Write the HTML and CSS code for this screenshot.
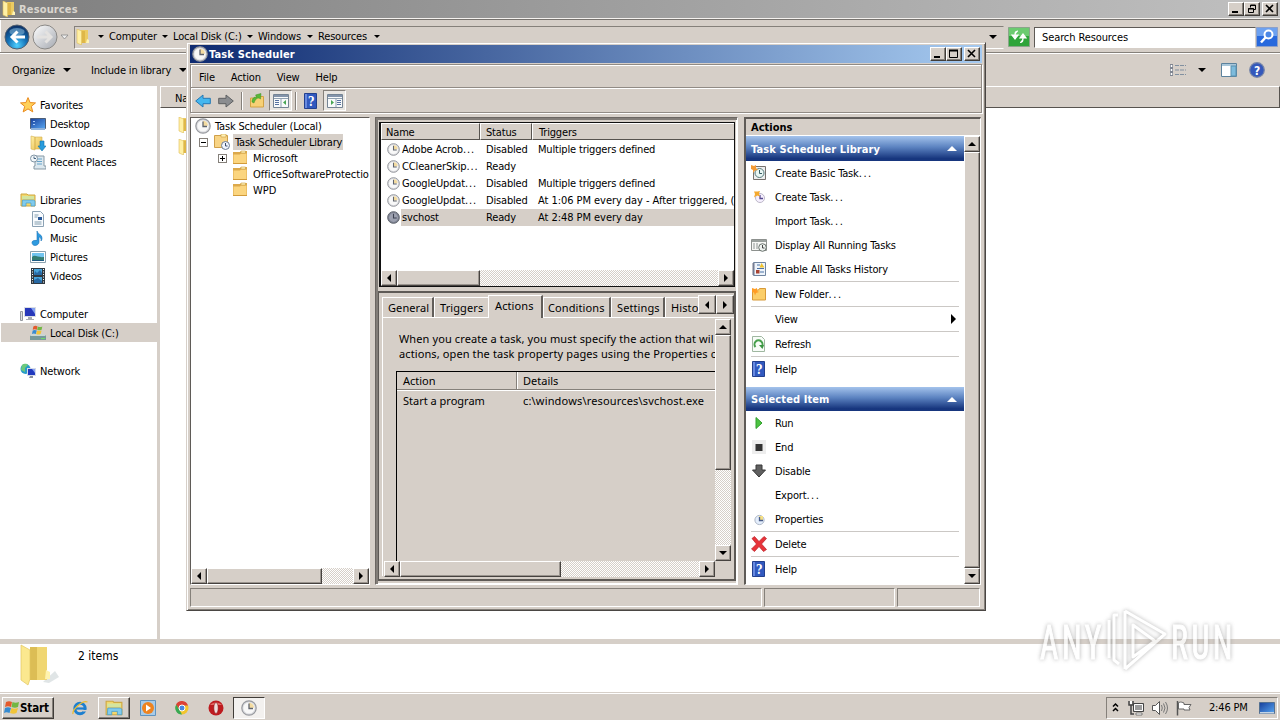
FILE: index.html
```html
<!DOCTYPE html>
<html lang="en">
<head>
    <meta charset="UTF-8">
    <title>Task Scheduler</title>
    <link rel="stylesheet" href="styles.css">
</head>
<body>
    <!-- Shared icons -->
    <svg class="sprite" width="0" height="0">
        <defs>
            <linearGradient id="gold" x1="0" y1="0" x2="1" y2="1"><stop offset="0" stop-color="#fff0a8"/><stop offset="1" stop-color="#e9bb46"/></linearGradient>
            <linearGradient id="screen" x1="0" y1="0" x2="1" y2="1"><stop offset="0" stop-color="#173e9a"/><stop offset="1" stop-color="#59a7f2"/></linearGradient>
            <linearGradient id="silver" x1="0" y1="0" x2="1" y2="1"><stop offset="0" stop-color="#fff"/><stop offset="1" stop-color="#a4a8b0"/></linearGradient>
            <radialGradient id="orb" cx=".5" cy=".85" r=".8"><stop offset="0" stop-color="#4fd0ff"/><stop offset=".5" stop-color="#1573b8"/><stop offset="1" stop-color="#0c3268"/></radialGradient>
        </defs>
        <symbol id="clock" viewBox="0 0 16 16"><circle cx="8" cy="8" r="7.2" fill="#d9dade" stroke="#97999e" stroke-width="1.200"/><circle cx="8" cy="8" r="5.6" fill="#f8f8f8"/><path d="M8 8V2.800a5 5 0 0 1 5 5z" fill="#f3dba0"/><path d="M8 3.4V8.5H12" fill="none" stroke="#5f646e" stroke-width="1.300"/></symbol>
        <symbol id="clock-dark" viewBox="0 0 16 16"><circle cx="8" cy="8" r="7.2" fill="#7c8190" stroke="#62666f" stroke-width="1.200"/><circle cx="8" cy="8" r="5.4" fill="#9da1b0"/><path d="M8 3.4V8.5H12" fill="none" stroke="#3d4252" stroke-width="1.300"/></symbol>
        <symbol id="folder" viewBox="0 0 16 16"><path d="M1 2h7l1-1h6v13H1z" fill="#dca94c"/><path d="M1.500 4.500h6.500l1-1h5.500V13h-13z" fill="#fbd57f"/><path d="M9 1h4.500v2H9z" fill="#fff1b8" stroke="#c99b3c" stroke-width=".6"/><path d="M1 13.500h14" stroke="#d29b3a"/></symbol>
        <symbol id="folder-clock" viewBox="0 0 16 16"><path d="M.5 1.500h13v12H.5z" fill="#f8d485" stroke="#d0a04a"/><path d="M7 0h5v3H7z" fill="#fff1b8" stroke="#c99b3c" stroke-width=".6"/><circle cx="11.500" cy="11.500" r="4" fill="#f0f5ff" stroke="#6d7b92"/><path d="M11.500 9v3h2" fill="none" stroke="#3b4b69"/></symbol>
        <symbol id="folder-open" viewBox="0 0 16 16"><path d="M6 1h7v13H6z" fill="#eccb62"/><path d="M7 2h3v12H7z" fill="#dfb748"/><path d="M2 0l4.500 2v14L2 14z" fill="#fff0a5" stroke="#dfbd59" stroke-width=".6"/><path d="M12 10l2 1v3h-3z" fill="#fff4b5"/></symbol>
        <symbol id="star" viewBox="0 0 16 16"><path d="M8 .6l2.100 5 5.400.3-4.200 3.500 1.500 5.500L8 11.900l-4.800 3 1.500-5.500L.5 5.900l5.400-.3z" fill="#ffd15a" stroke="#e98a1e"/></symbol>
        <symbol id="desktop" viewBox="0 0 16 16"><path d="M.5 2.500h15v10H.5z" fill="url(#screen)" stroke="#4c5d76"/><path d="M1 12h14v2H1z" fill="#8eb2dc"/><path d="M3 5h2v1H3zM3 8h2v1H3z" fill="#a8c9f5"/></symbol>
        <symbol id="download" viewBox="0 0 16 16"><path d="M1 1l4 1v13l-4-1zM5 2h7v12H5z" fill="url(#gold)" stroke="#d3b04e" stroke-width=".6"/><path d="M10 6h4v5h2l-4 5-4-5h2z" fill="#279bdd" stroke="#1374ad" stroke-width=".6"/></symbol>
        <symbol id="recent" viewBox="0 0 16 16"><path d="M5 2h9v10h2v3H4v-3h1z" fill="#dce8ef" stroke="#8799a5"/><path d="M7 5h5M7 7.500h5M7 10h5" stroke="#66a3c9"/><circle cx="4" cy="4.500" r="3.500" fill="#f2f7fa" stroke="#8296a5"/><path d="M4 2.500v2h2" fill="none" stroke="#45637e"/></symbol>
        <symbol id="library" viewBox="0 0 16 16"><path d="M1 2h6l1 1h7v11H1z" fill="#f4d76b" stroke="#cda843"/><path d="M2 4h12v3H2z" fill="#d3e5a0"/><path d="M2.500 8h11l1.500 1v5h-4v-3H6v3H2z" fill="#80cbed" stroke="#4a9bc6" stroke-width=".7"/></symbol>
        <symbol id="document" viewBox="0 0 16 16"><path d="M2.500.5h8l3 3v12h-11z" fill="#f8fbfe" stroke="#8ca2b4"/><path d="M4.500 4h4M4.500 6h3M4.500 11h7M4.500 13h7" stroke="#829dae"/><path d="M8 6h4v3H8z" fill="#285798"/></symbol>
        <symbol id="music" viewBox="0 0 16 16"><path d="M7 1c1 4 5 3 5 7 0 2-1 3-1 3 .5-3-1-4-2-4v5c0 2-2 3.500-4 3.500S2 14 2 12.500 4 10 7 10.500z" fill="#2e9be0" stroke="#1872b8" stroke-width=".6"/></symbol>
        <symbol id="picture" viewBox="0 0 16 16"><path d="M.5 2.500h15v11H.5z" fill="#fff" stroke="#8ba1ae"/><path d="M2 4h12v8H2z" fill="#71c4ef"/><path d="M2 8c3-3 6 1 12 0v4H2z" fill="#347d72"/><path d="M2 11h12v1H2z" fill="#1d5b83"/></symbol>
        <symbol id="video" viewBox="0 0 16 16"><path d="M1 0h14v16H1z" fill="#303941"/><path d="M4 1h8v6H4zM4 9h8v6H4z" fill="#48a5dc"/><path d="M5 3l2 2 3-3 2 3v2H4zM4 12l4-2 4 3v2H4z" fill="#2869a4"/><path d="M2.500 1v14M13.500 1v14" stroke="#fff" stroke-dasharray="1 1.500"/></symbol>
        <symbol id="computer" viewBox="0 0 16 16"><path d="M.5 5.500h2v9h-2z" fill="#dedfe2" stroke="#95999e"/><path d="M4 1h12v10H4z" fill="#d9dde4"/><path d="M5 2h10v8H5z" fill="#2738ba"/><path d="M11 2h4v6z" fill="#829ff0"/><path d="M8 11h4v2h2v1H6v-1h2z" fill="#a7abb3"/></symbol>
        <symbol id="winflag" viewBox="0 0 16 16"><path d="M2 2c2-1 4-1 6 0L7 7C5 6 3 6 1 7z" fill="#e45a2c"/><path d="M8.500 2c2 1 4 1 6.500 0l-1 5c-2 1-4 1-6.500 0z" fill="#72b743"/><path d="M1 8c2-1 4-1 6 0l-1.500 5c-2-1-4-1-5.500 0z" fill="#368bd1"/><path d="M7.500 8c2 1 4 1 6.500 0l-1.500 5c-2 1-4 1-6.500 0z" fill="#f1c438"/></symbol>
        <symbol id="disk" viewBox="0 0 16 16"><path d="M0 10h16v5H0z" fill="#77999a"/><path d="M1 9h13l2 2H0z" fill="#cad6d5"/><path d="M11 13h4v1h-4z" fill="#70db69"/><use href="#winflag" x="2" y="0" width="11" height="11"/></symbol>
        <symbol id="network" viewBox="0 0 16 16"><circle cx="5.500" cy="6" r="5" fill="#289bc8"/><path d="M2 2c3-2 5-1 6 0L5 5v4L1 7z" fill="#6cca7c"/><path d="M7 5h9v8H7z" fill="#d5dae8"/><path d="M8 6h7v6H8z" fill="#2039be"/><path d="M12 6h3v4z" fill="#8aa4f1"/><path d="M10 13h3v2H9z" fill="#8a909e"/></symbol>
        <symbol id="arrow-left" viewBox="0 0 16 16"><path d="M.7 8L8 2v3.300h7.300v5.400H8V14z" fill="#45b7ef" stroke="#2578b4"/></symbol>
        <symbol id="arrow-right" viewBox="0 0 16 16"><path d="M15.300 8L8 2v3.300H.7v5.400H8V14z" fill="#8b8d90" stroke="#5e6062"/></symbol>
        <symbol id="folder-up" viewBox="0 0 16 16"><path d="M1.500 5h5l1-1.500h7V14h-13z" fill="#f7d075" stroke="#d2a244"/><path d="M3 9c0-4 2-5 5-5L6.500 2 12 .5 11.500 6 10 5C7 5 6 7 5 10z" fill="#58b938" stroke="#3c8f25" stroke-width=".5"/></symbol>
        <symbol id="pane-left" viewBox="0 0 16 16"><path d="M.5 1.500h15v13H.5z" fill="#f8fafb" stroke="#758494"/><path d="M1 2h14v2H1z" fill="#8394ab"/><path d="M1 5.500h14M8 6v8" stroke="#8fa0b1"/><path d="M2 7.500h4M2 9.500h4M2 11.500h4" stroke="#5671a0"/><path d="M13 7v5l-3-2.500z" fill="#47a553"/></symbol>
        <symbol id="pane-right" viewBox="0 0 16 16"><path d="M.5 1.500h15v13H.5z" fill="#f8fafb" stroke="#758494"/><path d="M1 2h14v2H1z" fill="#8394ab"/><path d="M1 5.500h14M9 6v8" stroke="#8fa0b1"/><path d="M10 7.500h4M10 9.500h4M10 11.500h4" stroke="#5671a0"/><path d="M4 7v5l3-2.500z" fill="#47a553"/></symbol>
        <symbol id="help" viewBox="0 0 16 16"><path d="M1.500.5h12v15h-12z" fill="#3159bf" stroke="#23408e"/><path d="M2 1h2v14H2z" fill="#6789df"/><text x="8" y="12.500" text-anchor="middle" font-family="DejaVu Serif" font-size="12" font-weight="700" fill="#fff">?</text></symbol>
        <symbol id="basic-task" viewBox="0 0 16 16"><path d="M2.500 1.500h12v13h-12z" fill="#eee" stroke="#76716d"/><circle cx="8.500" cy="8" r="4.500" fill="#e8f5f2" stroke="#57797b"/><path d="M8.500 5v3.500h2.500" fill="none" stroke="#365c62"/><path d="M0 0l3 1 2-1v3l2 2-3 .5L2 8V5L0 4z" fill="#f29a35"/></symbol>
        <symbol id="new-task" viewBox="0 0 16 16"><circle cx="9" cy="9" r="4.500" fill="#f6f0ff" stroke="#bdb8c8"/><path d="M9 6v3.500h3" fill="none" stroke="#574a8e" stroke-width="1.300"/><path d="M3 2.500h3.500L9 2 8 4.500l1 3-3-1-3 2 1-3.500z" fill="#f5a92d"/></symbol>
        <symbol id="running" viewBox="0 0 16 16"><path d="M.5 2.500h15v11H.5z" fill="#f7f7f5" stroke="#8d918e"/><path d="M1 3h14v2H1z" fill="#9aa09d"/><path d="M2 7h6M2 9h6M2 11h6" stroke="#8d9492" stroke-dasharray="2 1"/><circle cx="11.500" cy="10.500" r="3.800" fill="#eef2ef" stroke="#68716c"/><path d="M11.500 8v3h2" fill="none" stroke="#444"/></symbol>
        <symbol id="history" viewBox="0 0 16 16"><path d="M2.500 1.500h12v13h-12z" fill="#eef4fb" stroke="#7085a0"/><path d="M1 3h3M1 5h3M1 7h3M1 9h3M1 11h3M1 13h3" stroke="#778"/><path d="M6 4h3M6 7.500h7M9 11h4" stroke="#4d72a4"/><path d="M10.500 2l3 4.500h-5z" fill="#f1c32d"/><path d="M5 9h3.500v3.500H5z" fill="#a84432"/></symbol>
        <symbol id="new-folder" viewBox="0 0 16 16"><path d="M1.500 4h6l1-1.500h6V14h-13z" fill="#fbce69" stroke="#d89a38"/><path d="M1 2l3 1L6 2v3l2 1-3 1-1 2.500-1-3-2-.5z" fill="#ff9c24"/></symbol>
        <symbol id="refresh" viewBox="0 0 16 16"><path d="M1.500.5h9l3 3v12h-12z" fill="#f8fcf8" stroke="#9fb7a0"/><path d="M10.500 11a4 4 0 1 0-6 0" fill="none" stroke="#47a04c" stroke-width="2"/><path d="M8 9h5l-1.500 4z" fill="#3b9542"/></symbol>
        <symbol id="run" viewBox="0 0 16 16"><path d="M5 2.500l6 5.500-6 5.500z" fill="#4cc342" stroke="#319f2c"/></symbol>
        <symbol id="end" viewBox="0 0 16 16"><path d="M1 1h14v14H1z" fill="#ededed"/><path d="M4.500 5h7v7h-7z" fill="#333"/></symbol>
        <symbol id="disable" viewBox="0 0 16 16"><path d="M5 2h6v5h3.500L8 14 1.500 7H5z" fill="#606060" stroke="#393939"/></symbol>
        <symbol id="properties" viewBox="0 0 16 16"><circle cx="8.500" cy="9" r="4.600" fill="#e4eefc" stroke="#aeb7c6"/><path d="M8 5h4v4H8z" fill="#f5df85"/><path d="M8.500 6v3.500H12" fill="none" stroke="#485b86" stroke-width="1.300"/></symbol>
        <symbol id="delete" viewBox="0 0 16 16"><path d="M1 2.500L3.500.5 8 5.500 13 .5 15.500 2.500 10.500 8l5 5.500-3 2L8 10.500l-4.500 5-3-2.500L5.500 8z" fill="#e8343a" stroke="#b81d24" stroke-width=".7"/></symbol>
    </svg>

    <!-- Explorer window -->
    <div class="explorer">
        <div class="explorer-title">
            <svg class="i16"><use href="#folder-open"/></svg>
            <b>Resources</b>
            <div class="win-buttons">
                <span class="wb"><svg viewBox="0 0 12 10"><path d="M2 8h6" stroke="#000" stroke-width="2"/></svg></span>
                <span class="wb"><svg viewBox="0 0 12 10"><path d="M4.500 3.500v-2.500h5v4.500h-2M2.500 4.500h5v4h-5z" fill="none" stroke="#000"/><path d="M4 1.500h6M2 5h6" stroke="#000"/></svg></span>
                <span class="wb close"><svg viewBox="0 0 12 10"><path d="M2 1l7 7M9 1l-7 7" stroke="#000" stroke-width="1.600"/></svg></span>
            </div>
        </div>
        <div class="navbar">
            <svg class="travel" viewBox="0 0 66 28">
                <circle cx="13" cy="14" r="12" fill="url(#orb)" stroke="#53606f"/>
                <path d="M6 7a10 7 0 0 1 14 0c2 4-2 5-7 5S4 11 6 7z" fill="#7fb1d4" opacity=".6"/>
                <path d="M21 14H8M13.500 8.500L8 14l5.500 5.500" fill="none" stroke="#fff" stroke-width="3"/>
                <circle cx="41" cy="14" r="12" fill="url(#silver)" stroke="#8b8986"/>
                <path d="M33 14h14M41.500 8.500L47 14l-5.500 5.500" fill="none" stroke="#e4e2e0" stroke-width="3"/>
                <path d="M57 12h7l-3.500 4z" fill="#eee" stroke="#888" stroke-width=".8"/>
            </svg>
            <div class="address">
                <svg class="i16"><use href="#folder-open"/></svg>
                <i class="down first"></i><span class="c1">Computer</span>
                <i class="down"></i><span class="c2">Local Disk (C:)</span>
                <i class="down"></i><span class="c3">Windows</span>
                <i class="down"></i><span class="c4">Resources</span>
                <i class="down"></i>
                <i class="down last"></i>
            </div>
            <svg class="go" viewBox="0 0 22 20"><path d="M.5.5h21v19H.5z" fill="#2fa43a" stroke="#8aa58a"/><path d="M1 1h20v8H1z" fill="#6ccb70"/><path d="M10 4C7 4 7 6 7 8M4 8h6l-3 4zM12 15.500c3 0 3-2 3-4M12 11h6l-3-4z" fill="#fff" stroke="#fff" stroke-width="1.200"/></svg>
            <div class="search">Search Resources</div>
            <svg class="go" viewBox="0 0 22 20"><path d="M.5.5h21v19H.5z" fill="#2869dd" stroke="#8da0c8"/><path d="M1 1h20v8H1z" fill="#6da1f0"/><circle cx="12.500" cy="7.500" r="4" fill="#4b87e6" stroke="#fff" stroke-width="2"/><path d="M9.500 10.500L5 15.500" stroke="#fff" stroke-width="2.500"/></svg>
        </div>
        <div class="commands">
            <span class="organize">Organize</span><i class="down big"></i>
            <span class="include">Include in library</span><i class="down big"></i>
            <svg class="views" viewBox="0 0 16 14"><path d="M1.500 1v12" stroke="#7f8590" stroke-width="3"/><path d="M1.500 2v10" stroke="#fff" stroke-width="1.500" stroke-dasharray="2 2"/><path d="M5 2.500h11M5 7h11M5 11.500h11" stroke="#8190a0" stroke-dasharray="4 1"/></svg>
            <i class="down big"></i>
            <svg class="preview" viewBox="0 0 16 14"><path d="M.5.5h15v13H.5z" fill="#fff" stroke="#5c829d"/><path d="M1 1h14v2H1z" fill="#a9c7da"/><path d="M10 3h5v10h-5z" fill="#7dbbdc" stroke="#5a91b0"/></svg>
            <svg class="i16 qhelp" viewBox="0 0 16 16"><circle cx="8" cy="8" r="7.300" fill="#3458bb" stroke="#7886a8" stroke-width="1.200"/><text x="8" y="12.500" text-anchor="middle" font-family="DejaVu Sans" font-size="12" font-weight="700" fill="#fff">?</text></svg>
        </div>
        <div class="explorer-body">
            <div class="places">
                <div class="place group"><svg class="i16"><use href="#star"/></svg><span>Favorites</span></div>
                <div class="place"><svg class="i16"><use href="#desktop"/></svg><span>Desktop</span></div>
                <div class="place"><svg class="i16"><use href="#download"/></svg><span>Downloads</span></div>
                <div class="place"><svg class="i16"><use href="#recent"/></svg><span>Recent Places</span></div>
                <div class="place group spaced"><svg class="i16"><use href="#library"/></svg><span>Libraries</span></div>
                <div class="place"><svg class="i16"><use href="#document"/></svg><span>Documents</span></div>
                <div class="place"><svg class="i16"><use href="#music"/></svg><span>Music</span></div>
                <div class="place"><svg class="i16"><use href="#picture"/></svg><span>Pictures</span></div>
                <div class="place"><svg class="i16"><use href="#video"/></svg><span>Videos</span></div>
                <div class="place group spaced"><svg class="i16"><use href="#computer"/></svg><span>Computer</span></div>
                <div class="place selected"><svg class="i16"><use href="#disk"/></svg><span>Local Disk (C:)</span></div>
                <div class="place group spaced"><svg class="i16"><use href="#network"/></svg><span>Network</span></div>
            </div>
            <div class="files">
                <div class="files-head">Na</div>
                <div class="file"><svg class="i16"><use href="#folder-open"/></svg></div>
                <div class="file"><svg class="i16"><use href="#folder-open"/></svg></div>
            </div>
        </div>
        <div class="details">
            <svg class="big-folder" viewBox="0 0 42 44"><path d="M24 38l12-11 4 6-10 6z" fill="#ccd3d6" opacity=".6"/><path d="M11 3h17v33H11z" fill="#dcbd55"/><path d="M18 3h10v33H18z" fill="#f0d672"/><path d="M27 26l4 2v7h-5z" fill="#fff3ae"/><path d="M2 1l9 5v29l-2 6-7-5z" fill="#fbe88f" stroke="#e2c560" stroke-width=".7"/></svg>
            <span>2 items</span>
        </div>
    </div>

    <!-- Task Scheduler window -->
    <div class="scheduler">
        <div class="title">
            <svg class="i16"><use href="#clock"/></svg>
            <b>Task Scheduler</b>
            <div class="win-buttons">
                <span class="wb"><svg viewBox="0 0 12 10"><path d="M2 8h6" stroke="#000" stroke-width="2"/></svg></span>
                <span class="wb"><svg viewBox="0 0 12 10"><path d="M1.500 1.500h8v7h-8z" fill="none" stroke="#000"/><path d="M1 1.500h9" stroke="#000" stroke-width="2"/></svg></span>
                <span class="wb close"><svg viewBox="0 0 12 10"><path d="M2 1l7 7M9 1l-7 7" stroke="#000" stroke-width="1.600"/></svg></span>
            </div>
        </div>
        <div class="bars">
            <div class="menu"><span>File</span><span>Action</span><span>View</span><span>Help</span></div>
            <div class="tools">
                <svg class="i16"><use href="#arrow-left"/></svg>
                <svg class="i16"><use href="#arrow-right"/></svg>
                <i class="sep"></i>
                <svg class="i16"><use href="#folder-up"/></svg>
                <span class="toggled"><svg class="i16"><use href="#pane-left"/></svg></span>
                <i class="sep s2"></i>
                <svg class="i16"><use href="#help"/></svg>
                <span class="toggled last"><svg class="i16"><use href="#pane-right"/></svg></span>
            </div>
        </div>

        <div class="panes">
            <div class="tree">
                <div class="nodes">
                    <div class="node root"><svg class="i16"><use href="#clock"/></svg><span>Task Scheduler (Local)</span></div>
                    <div class="node lib"><i class="expander minus"></i><svg class="i16"><use href="#folder-clock"/></svg><span class="picked">Task Scheduler Library</span></div>
                    <div class="node sub"><i class="expander"></i><svg class="i16"><use href="#folder"/></svg><span>Microsoft</span></div>
                    <div class="node sub"><i class="expander none"></i><svg class="i16"><use href="#folder"/></svg><span>OfficeSoftwareProtectio</span></div>
                    <div class="node sub"><i class="expander none"></i><svg class="i16"><use href="#folder"/></svg><span>WPD</span></div>
                </div>
                <div class="hscroll"><i class="sb left"></i><i class="thumb tree-thumb"></i><i class="sb right"></i></div>
            </div>

            <div class="middle">
                <div class="list">
                    <div class="row head"><span>Name</span><span>Status</span><span>Triggers</span></div>
                    <div class="rows">
                        <div class="row"><svg><use href="#clock"/></svg><span class="name">Adobe Acrob<em>...</em></span><span class="status">Disabled</span><span>Multiple triggers defined</span></div>
                        <div class="row"><svg><use href="#clock"/></svg><span class="name">CCleanerSkip<em>...</em></span><span class="status">Ready</span></div>
                        <div class="row"><svg><use href="#clock"/></svg><span class="name">GoogleUpdat<em>...</em></span><span class="status">Disabled</span><span>Multiple triggers defined</span></div>
                        <div class="row"><svg><use href="#clock"/></svg><span class="name">GoogleUpdat<em>...</em></span><span class="status">Disabled</span><span class="when">At 1:06 PM every day - After triggered, (</span></div>
                        <div class="row current"><svg><use href="#clock-dark"/></svg><span class="name">svchost</span><span class="status">Ready</span><span class="when">At 2:48 PM every day</span></div>
                    </div>
                    <div class="hscroll"><i class="sb left"></i><i class="thumb list-thumb"></i><i class="sb right"></i></div>
                </div>
                <div class="task">
                    <div class="tabs">
                        <span class="tab t1">General</span><span class="tab t2">Triggers</span><span class="tab active">Actions</span><span class="tab t4">Conditions</span><span class="tab t5">Settings</span><span class="tab t6">Histo</span>
                        <span class="spin"><i class="sb left"></i><i class="sb right"></i></span>
                    </div>
                    <div class="tab-page">
                        <div class="page-content">
                            <p>When you create a task, you must specify the action that wil<br>actions, open the task property pages using the Properties c</p>
                            <div class="grid">
                                <div class="grid-head"><span>Action</span><span>Details</span></div>
                                <div class="grid-row"><span>Start a program</span><span class="path">c:\windows\resources\svchost.exe</span></div>
                            </div>
                        </div>
                        <div class="vscroll"><i class="sb up"></i><i class="thumb"></i><i class="sb dn"></i></div>
                        <div class="hscroll"><i class="sb left"></i><i class="thumb page-thumb"></i><i class="sb right"></i></div>
                    </div>
                </div>
            </div>

            <div class="actions">
                <div class="actions-title">Actions</div>
                <div class="actions-body">
                    <div class="action-list">
                        <div class="section"><b>Task Scheduler Library</b><i></i></div>
                        <div class="item"><svg class="i16"><use href="#basic-task"/></svg><span>Create Basic Task<em>...</em></span></div>
                        <div class="item"><svg class="i16"><use href="#new-task"/></svg><span>Create Task<em>...</em></span></div>
                        <div class="item"><svg class="i16"></svg><span>Import Task<em>...</em></span></div>
                        <div class="item"><svg class="i16"><use href="#running"/></svg><span>Display All Running Tasks</span></div>
                        <div class="item"><svg class="i16"><use href="#history"/></svg><span>Enable All Tasks History</span></div>
                        <hr>
                        <div class="item"><svg class="i16"><use href="#new-folder"/></svg><span>New Folder<em>...</em></span></div>
                        <hr>
                        <div class="item"><svg class="i16"></svg><span>View</span><i class="more"></i></div>
                        <hr>
                        <div class="item"><svg class="i16"><use href="#refresh"/></svg><span>Refresh</span></div>
                        <hr>
                        <div class="item"><svg class="i16"><use href="#help"/></svg><span>Help</span></div>
                        <div class="section second"><b>Selected Item</b><i></i></div>
                        <div class="item"><svg class="i16"><use href="#run"/></svg><span>Run</span></div>
                        <div class="item"><svg class="i16"><use href="#end"/></svg><span>End</span></div>
                        <div class="item"><svg class="i16"><use href="#disable"/></svg><span>Disable</span></div>
                        <div class="item"><svg class="i16"></svg><span>Export<em>...</em></span></div>
                        <div class="item"><svg class="i16"><use href="#properties"/></svg><span>Properties</span></div>
                        <hr>
                        <div class="item"><svg class="i16"><use href="#delete"/></svg><span>Delete</span></div>
                        <hr>
                        <div class="item"><svg class="i16"><use href="#help"/></svg><span>Help</span></div>
                    </div>
                    <div class="vscroll"><i class="sb up"></i><i class="thumb"></i><i class="sb dn"></i></div>
                </div>
            </div>
        </div>
        <div class="statusbar"><span></span><span></span><span></span></div>
    </div>

    <!-- Taskbar -->
    <div class="taskbar">
        <div class="start"><svg class="i16"><use href="#winflag"/></svg><b>Start</b></div>
        <div class="launch">
            <span><svg class="i16" viewBox="0 0 16 16"><circle cx="8" cy="8.500" r="5.200" fill="none" stroke="#1d7fcf" stroke-width="3"/><path d="M4 8.500h9" stroke="#1d7fcf" stroke-width="2.200"/><path d="M11 10h5v1.500h-5z" fill="#d6cfc8"/><path d="M1 14C0 10 10 0 15.500 2" fill="none" stroke="#e9bb31" stroke-width="1.300"/></svg></span>
            <span class="up"><svg class="i18"><use href="#library"/></svg></span>
            <span><svg class="i16" viewBox="0 0 16 16"><path d="M.5.500h15v15H.5z" fill="#a8cbe8" stroke="#5f93bf"/><circle cx="8" cy="8" r="6" fill="#ee8320"/><path d="M6 4.500l5 3.500-5 3.500z" fill="#fff"/></svg></span>
            <span><svg class="i16" viewBox="0 0 16 16"><circle cx="8" cy="8" r="6.500" fill="#f2c52c"/><path d="M2 4.500a6.500 6.500 0 0 1 12 1H8L5 9z" fill="#dc4136"/><path d="M2.300 4.500L6 11l2 3.500A6.500 6.500 0 0 1 2.300 4.500z" fill="#38a854"/><circle cx="8" cy="8" r="3" fill="#4b87df" stroke="#fff"/></svg></span>
            <span><svg class="i16" viewBox="0 0 16 16"><circle cx="8" cy="8" r="7.500" fill="#be1b1f"/><path d="M2 5a7 5 0 0 1 12 0z" fill="#e36a65"/><ellipse cx="8" cy="8" rx="2.200" ry="5.500" fill="#efdddb" stroke="#8b1013" stroke-width=".6"/></svg></span>
            <span class="down-btn"><svg class="i16"><use href="#clock"/></svg></span>
        </div>
        <div class="tray">
            <svg width="7" height="11" viewBox="0 0 7 11"><path d="M1 4.500L3.500 2 6 4.500M1 9l2.500-2.500L6 9" fill="none" stroke="#000" stroke-width="1.500"/></svg>
            <svg class="i16" viewBox="0 0 16 16"><path d="M5.500 3.500h10v8h-10z" fill="#9b9b9b" stroke="#444"/><path d="M6.500 4.500h8v6h-8z" fill="none" stroke="#fff"/><path d="M8 13h6v2H8z" fill="#fff" stroke="#555" stroke-width=".7"/><path d="M1 1v4h4V1M3 5v9h3" fill="none" stroke="#444" stroke-width="1.500"/><path d="M2 1h2v3H2z" fill="#fff"/></svg>
            <svg class="i16" viewBox="0 0 16 16"><path d="M.5 5.500h3l4-4v13l-4-4h-3z" fill="#fff" stroke="#555"/><path d="M9.500 5q1.500 3 0 6M11.500 3.500q3 4.500 0 9M13.500 2q4 6 0 12" fill="none" stroke="#777"/></svg>
            <svg class="i16" viewBox="0 0 16 16"><path d="M1.500 1v14.500" stroke="#555" stroke-width="1.500"/><path d="M2.500 2.500c3-1 4 0 5.500.5v1.500h7l-2 3 1 2.500H8V9H2.500z" fill="#fff" stroke="#666"/></svg>
            <span>2:46 PM</span>
            <svg class="i16" viewBox="0 0 16 16"><path d="M.5 2.500h15v11H.5z" fill="url(#screen)" stroke="#547091"/><path d="M1 12h14v1.500H1z" fill="#c5d4e4"/></svg>
        </div>
    </div>

    <!-- Watermark -->
    <svg class="watermark" width="200" height="70" viewBox="0 0 200 70">
        <g fill="none" stroke="#fff" stroke-width="3" stroke-linejoin="round">
            <path d="M88 5v58M88 5l40 23-40 35M96 19v32l22-16zM81 9h-4v45l5 4M72 14v38"/>
        </g>
        <text transform="translate(3 53) scale(.66 1)" textLength="93">ANY</text>
        <text transform="translate(134 53) scale(.66 1)" textLength="93">RUN</text>
    </svg>
</body>
</html>
```
FILE: styles.css
```css
* {
    margin: 0;
    padding: 0;
    box-sizing: border-box;
}

:root {
    --face: #d6cfc8;
    --dark: #46423f;
    --mid: #85807a;
}

body {
    width: 1280px;
    height: 720px;
    overflow: hidden;
    position: relative;
    display: flex;
    flex-direction: column;
    font-family: 'DejaVu Sans Condensed', 'DejaVu Sans', sans-serif;
    font-stretch: condensed;
    font-size: 11px;
    line-height: 16px;
    letter-spacing: -0.17px;
    color: #000;
    background: #fff;
    white-space: nowrap;
}

svg {
    display: block;
    flex: none;
}

/* trailing dots are set wider than the text */
em {
    font-style: normal;
    letter-spacing: 1.2px;
}

.sprite {
    position: absolute;
}

.i16 {
    width: 16px;
    height: 16px;
}

.i18 {
    width: 18px;
    height: 18px;
}

/* small triangles */
.down {
    flex: none;
    width: 0;
    height: 0;
    border: 3px solid transparent;
    border-top-color: #000;
    border-bottom: 0;
}

.down.big {
    border-width: 4px 4px 0;
}

/* caption buttons */
.win-buttons {
    display: flex;
    margin-left: auto;
}

.wb {
    width: 16px;
    height: 14px;
    padding: 1px 1px;
    background: var(--face);
    border: 1px solid;
    border-color: #fff #403c38 #403c38 #fff;
    box-shadow: inset -1px -1px var(--mid);
}

.wb svg {
    width: 12px;
    height: 10px;
}

.wb.close {
    margin-left: 2px;
}

/* explorer */
.explorer {
    height: 692px;
    display: flex;
    flex-direction: column;
}

.explorer-title {
    height: 18px;
    display: flex;
    align-items: center;
    padding: 0 2px 0 1px;
    gap: 2px;
    color: #dad6cf;
    background: linear-gradient(90deg, #7f7f7f, #c0c0c0);
}

.title b,
.explorer-title b {
    padding-top: 1px;
    letter-spacing: 0.15px;
}

.navbar {
    height: 36px;
    display: flex;
    align-items: center;
    padding: 2px 2px 0 4px;
    background: var(--face);
    border-top: 1px solid #f5f2ef;
    border-bottom: 1px solid #fff;
    box-shadow: inset 0 1px #77736f, inset 0 -1px var(--mid), inset 1px 0 #fff;
}

.travel {
    width: 66px;
    height: 28px;
}

.address {
    width: 930px;
    height: 23px;
    margin-left: 4px;
    padding: 0 0 1px 1px;
    display: flex;
    align-items: center;
    border: 1px solid;
    border-color: var(--mid) transparent #fff var(--mid);
}

.address .i16 {
    margin-left: -1px;
    margin-right: 1px;
}

.address span {
    margin: 0 6px 0 5px;
}

.address .first {
    margin-left: 6px;
}

.address .last {
    margin: 0 6px 0 auto;
    border-width: 4px 4px 0;
}

.c1 { width: 47px; }
.c2 { width: 68px; }
.c3 { width: 43px; }
.c4 { width: 50px; }

.go {
    width: 22px;
    height: 20px;
    margin-left: 4px;
}

.search {
    width: 222px;
    height: 21px;
    margin-left: 4px;
    padding: 2px 7px;
    letter-spacing: -0.1px;
    background: #fff;
    border: 1px solid;
    border-color: #5e5a56 #d6cfc8 #fff #5e5a56;
}

.search + .go {
    margin-left: 0;
}

.commands {
    height: 32px;
    display: flex;
    align-items: center;
    padding: 0 15px 0 12px;
    background: var(--face);
}

.commands span {
    padding-top: 1px;
}

.organize {
    width: 51px;
}

.include {
    width: 88px;
    margin-left: 20px;
}

.views {
    width: 16px;
    height: 14px;
    margin-left: auto;
    margin-right: 12px;
}

.preview {
    width: 16px;
    height: 14px;
    margin: 0 12px 0 15px;
}

.explorer-body {
    flex: 1;
    display: flex;
    background: #fff;
}

.places {
    width: 160px;
    padding-top: 9px;
    border-right: 3px solid var(--face);
}

.place {
    height: 19px;
    display: flex;
    align-items: center;
    gap: 4px;
    padding-left: 30px;
}

.place span,
.node span,
.item span {
    padding-top: 2px;
}

.place.group {
    padding-left: 20px;
}

.place.spaced {
    margin-top: 19px;
}

.place.selected {
    width: 159px;
    margin-left: 1px;
    padding-left: 29px;
    background: var(--face);
}

.files {
    flex: 1;
}

.files-head {
    height: 22px;
    margin-bottom: 6px;
    padding: 4px 14px;
    background: var(--face);
    border: 1px solid;
    border-color: #fff #57534f #57534f #fff;
}

.file {
    height: 22px;
    padding: 3px 17px;
}

.details {
    height: 53px;
    display: flex;
    background: #fff;
    border-top: 5px solid var(--face);
}

.big-folder {
    width: 42px;
    height: 44px;
    margin-left: 19px;
}

.details span {
    margin: 4px 0 0 17px;
    font-size: 12px;
    letter-spacing: 0;
}

/* task scheduler */
.scheduler {
    position: absolute;
    left: 186px;
    top: 42px;
    width: 800px;
    height: 569px;
    padding: 1px 3px 2px 2px;
    display: flex;
    flex-direction: column;
    background: var(--face);
    border: 1px solid;
    border-color: #d6cfc8 #4a4643 #4a4643 #d6cfc8;
    box-shadow: inset 1px 1px #fff, inset -1px -1px var(--mid);
}

.scheduler .title {
    height: 18px;
    margin: 1px 0 1px 1px;
    padding: 0 2px 0 2px;
    display: flex;
    align-items: center;
    gap: 1px;
    color: #fff;
    background: linear-gradient(90deg, #0e2a70, #a6caf0);
}

.bars {
    margin-left: 1px;
    height: 49px;
    border: 1px solid #918b85;
    box-shadow: inset 1px 1px #fff, 1px 1px #fff;
}

.menu {
    height: 24px;
    padding: 5px 8px 3px;
    display: flex;
    gap: 16px;
    border-bottom: 1px solid #fff;
    box-shadow: 0 -1px #918b85 inset;
}

.tools {
    height: 23px;
    padding-left: 4px;
    display: flex;
    align-items: center;
    gap: 7px;
}

.sep {
    width: 2px;
    height: 18px;
    border-left: 1px solid var(--mid);
    border-right: 1px solid #fff;
    margin: 0 -1px 0 0;
}

.sep.s2 {
    margin: 0 -1px 0 -1px;
}

.toggled {
    width: 23px;
    height: 21px;
    margin: 0 -3px;
    padding: 2px 3px;
    background: #e9e6e2;
    border: 1px solid;
    border-color: var(--mid) #fff #fff var(--mid);
}

.toggled.last {
    margin-left: -3px;
}

.panes {
    height: 468px;
    margin-top: 4px;
    display: flex;
}

/* scrollbars */
.hscroll,
.vscroll {
    display: flex;
    background: repeating-conic-gradient(#fff 0 25%, #d6cfc8 0 50%) 0 0 / 2px 2px;
}

.hscroll {
    height: 16px;
}

.vscroll {
    width: 16px;
    flex-direction: column;
}

.thumb,
.sb {
    flex: none;
    background: var(--face);
    border: 1px solid;
    border-color: #fff var(--dark) var(--dark) #fff;
    box-shadow: inset -1px -1px #9a948e;
}

.sb {
    width: 16px;
    height: 16px;
    display: flex;
    align-items: center;
    justify-content: center;
}

.sb::after {
    content: "";
    border: 4px solid transparent;
}

.sb.left::after { border-right-color: #000; border-left: 0; }
.sb.right::after { border-left-color: #000; border-right: 0; }
.sb.up::after { border-bottom-color: #000; border-top: 0; }
.sb.dn::after { border-top-color: #000; border-bottom: 0; }

.sb.right,
.sb.dn {
    margin-left: auto;
}

.vscroll .sb.dn {
    margin: auto 0 0;
}

.tree-thumb { width: 115px; }
.list-thumb { width: 83px; }
.page-thumb { width: 161px; }

/* tree */
.tree {
    width: 180px;
    margin-left: 1px;
    display: flex;
    flex-direction: column;
    background: #fff;
    border: 1px solid;
    border-color: #5f5b57 #fff #fff #5f5b57;
}

.nodes {
    flex: 1;
    overflow: hidden;
}

.node {
    height: 16px;
    display: flex;
    align-items: center;
}

.root {
    padding-left: 4px;
    gap: 4px;
}

.lib {
    padding-left: 8px;
}

.lib .i16 {
    margin: 0 3px 0 6px;
}

.sub {
    padding-left: 27px;
    letter-spacing: -0.02px;
}

.sub .i16 {
    margin: 0 5px 0 5px;
}

.node .picked {
    height: 16px;
    padding: 1px 1px 0 2px;
    letter-spacing: -0.2px;
    background: var(--face);
}

.expander {
    flex: none;
    width: 9px;
    height: 9px;
    border: 1px solid var(--mid);
    background: linear-gradient(#000, #000) center / 5px 1px no-repeat, linear-gradient(#000, #000) center / 1px 5px no-repeat;
}

.expander.minus {
    background: linear-gradient(#000, #000) center / 5px 1px no-repeat;
}

.expander.none {
    visibility: hidden;
}

/* middle column */
.middle {
    width: 363px;
    margin-left: 5px;
    padding: 3px 2px 3px 3px;
    border: 1px solid;
    border-color: #6b6662 #fff #fff #6b6662;
    box-shadow: inset 2px 2px #827d78, inset -1px -1px #fff;
}

.list {
    width: 356px;
    height: 165px;
    margin: 1px 0 0 0;
    display: flex;
    flex-direction: column;
    background: #fff;
    border: 1px solid #111;
    border-width: 1px 1px 1px 2px;
    overflow: hidden;
}

.row {
    height: 17px;
    display: flex;
    align-items: center;
}

.row > * {
    flex: none;
}

.row svg {
    width: 13px;
    height: 13px;
    margin: 0 1px 0 6px;
}

.row .name {
    width: 84px;
    padding-left: 1px;
    letter-spacing: -0.15px;
}

.row .name em {
    letter-spacing: 0.9px;
}

.row .status {
    width: 53px;
    padding-left: 1px;
}

.row .when {
    letter-spacing: -0.05px;
}

.row.head {
    height: 17px;
    background: var(--face);
}

.head span {
    height: 17px;
    padding-left: 5px;
    line-height: 17px;
    border: 1px solid;
    border-color: #fff #57534f #57534f #fff;
}

.head span:nth-child(1) { width: 99px; padding-left: 4px; }
.head span:nth-child(2) { width: 52px; }
.head span:nth-child(3) { width: 202px; padding-left: 6px; border-right: 0; }

.rows {
    flex: 1;
    padding-top: 1px;
}

.current {
    background: linear-gradient(var(--face), var(--face)) 20px 0 no-repeat;
}

.task {
    width: 358px;
    height: 290px;
    margin: 4px 0 0 -1px;
    padding: 2px 2px 2px 3px;
    border: 2px solid #5e5a56;
    border-width: 2px 2px 2px 1px;
    background: var(--face);
}

.tabs {
    height: 23px;
    display: flex;
    align-items: flex-end;
    position: relative;
    border-bottom: 1px solid #fff;
    font-family: 'Noto Sans', sans-serif;
    font-size: 11px;
    letter-spacing: 0.1px;
    margin-right: -2px;
}

.tab {
    height: 20px;
    padding: 2px 0 0 5px;
    border: 1px solid #fff;
    border-right: 2px solid #625e5a;
    border-bottom: 0;
}

.t1 { width: 52px; }
.t2 { width: 54px; border-right: 0; }
.t4 { width: 68px; padding-left: 4px; }
.t5 { width: 54px; }
.t6 { width: 34px; overflow: hidden; border-right: 0; }

.tab.active {
    width: 55px;
    height: 23px;
    margin-bottom: -1px;
    padding-left: 6px;
    background: var(--face);
}

.spin {
    display: flex;
    position: absolute;
    right: 0;
    top: 0;
}

.spin .sb {
    width: 18px;
    height: 19px;
    margin: 0;
}

.tab-page {
    height: 258px;
    padding: 1px 0 0 1px;
    display: grid;
    grid-template-columns: 331px 16px;
    grid-template-rows: 242px 16px;
    border-left: 1px solid #fff;
}

.page-content {
    padding: 12px 0 0 12px;
    overflow: hidden;
    font-family: 'Noto Sans', sans-serif;
    font-size: 11px;
    letter-spacing: 0;
}

.page-content p {
    margin-left: 3px;
    line-height: 15px;
    letter-spacing: 0.11px;
}

.grid {
    height: 220px;
    margin-top: 10px;
    border: 1px solid #000;
    border-right: 0;
}

.grid-head,
.grid-row {
    display: flex;
}

.grid-head {
    height: 18px;
    line-height: 18px;
    border-bottom: 1px solid var(--mid);
    box-shadow: 0 1px #fff;
}

.grid-head span,
.grid-row span {
    width: 119px;
    padding-left: 6px;
}

.grid-head span + span {
    border-left: 1px solid var(--mid);
    box-shadow: inset 1px 0 #fff;
}

.grid-row {
    padding-top: 3px;
}

.grid-row .path {
    padding-left: 7px;
    letter-spacing: 0.17px;
}

.tab-page .vscroll .thumb {
    height: 135px;
}

/* actions pane */
.actions {
    width: 237px;
    margin-left: 6px;
    border: 1px solid;
    border-width: 2px 1px 1px 2px;
    border-color: #5f5b57 #fff #fff #5f5b57;
}

.actions-title {
    height: 17px;
    padding-left: 5px;
    line-height: 17px;
    font-weight: bold;
    letter-spacing: 0;
    border-bottom: 1px solid #fff;
}

.actions-body {
    display: flex;
    height: 448px;
    background: #fff;
}

.action-list {
    width: 218px;
}

.section {
    height: 25px;
    display: flex;
    align-items: center;
    justify-content: space-between;
    padding: 0 7px 0 5px;
    color: #fff;
    letter-spacing: 0.1px;
    background: linear-gradient(#a4c3ec, #5b82c0 45%, #17367e 90%);
}

.section b {
    padding-top: 2px;
}

.section.second {
    height: 24px;
    margin-top: 6px;
}

.section i {
    border: 5px solid transparent;
    border-top: 0;
    border-bottom-color: #fff;
}

.item {
    height: 24px;
    display: flex;
    align-items: center;
    gap: 8px;
    padding: 0 8px 0 5px;
}

.item em {
    letter-spacing: 1.6px;
}

.more {
    margin-left: auto;
    border: 5px solid transparent;
    border-left-color: #000;
    border-right: 0;
}

hr {
    height: 1px;
    margin: 0 5px;
    border: 0;
    background: #cbc8c5;
}

.actions .thumb {
    flex: 1;
}

.statusbar {
    height: 19px;
    margin: 3px 0 0 1px;
    display: grid;
    grid-template-columns: 572px 131px 83px;
    gap: 2px;
}

.statusbar span {
    border: 1px solid;
    border-color: var(--mid) #fff #fff var(--mid);
}

/* taskbar */
.taskbar {
    height: 28px;
    display: flex;
    align-items: center;
    padding: 2px 2px 0;
    background: var(--face);
    border-top: 1px solid var(--face);
    box-shadow: inset 0 1px #fff;
}

.start {
    width: 52px;
    height: 22px;
    display: flex;
    align-items: center;
    padding-left: 1px;
    letter-spacing: -0.1px;
    font-size: 11.5px;
    border: 1px solid;
    border-color: #fff #403c38 #403c38 #fff;
    box-shadow: inset -1px -1px var(--mid);
}

.launch {
    display: flex;
    gap: 2px;
    margin-left: 10px;
}

.launch span {
    width: 32px;
    height: 22px;
    display: flex;
    align-items: center;
    justify-content: center;
}

.launch .up {
    border: 1px solid;
    border-color: #fff #403c38 #403c38 #fff;
    box-shadow: inset -1px -1px var(--mid);
}

.launch .down-btn {
    margin-left: -1px;
    border: 1px solid;
    border-color: #403c38 #fff #fff #403c38;
    background: #f3f1ef;
}

.tray {
    width: 172px;
    height: 22px;
    margin-left: auto;
    display: flex;
    align-items: center;
    gap: 8px;
    padding-left: 5px;
    border: 1px solid;
    border-color: var(--mid) #fff #fff var(--mid);
}

.tray .i16:nth-child(n+2) {
    margin-left: 1px;
}

.tray .i16:nth-child(n+3) {
    margin-left: 0;
}

.tray span {
    margin: 0 3px 0 9px;
}

.watermark {
    position: absolute;
    left: 1037px;
    top: 606px;
    opacity: 0.75;
    filter: drop-shadow(0 0 2px #999);
}

.watermark text {
    font-family: Roboto, sans-serif;
    font-size: 48px;
    letter-spacing: 0;
    fill: #fff;
    stroke: #fff;
    stroke-width: 1.2px;
}
```
